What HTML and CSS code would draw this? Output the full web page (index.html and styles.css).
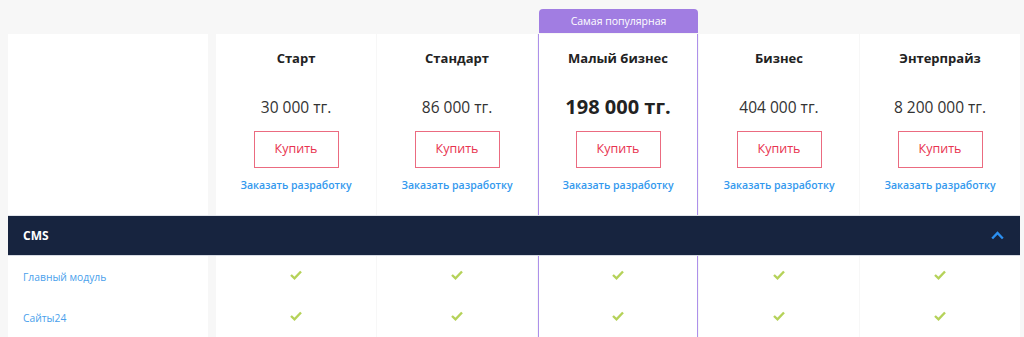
FILE: index.html
```html
<!DOCTYPE html>
<html lang="ru">
<head>
<meta charset="utf-8">
<title>Тарифы</title>
<link rel="stylesheet" href="styles.css">
</head>
<body>
<div class="table">
  <div class="grid head">
    <div class="cell first"></div>
    <div class="cell plan">
      <div class="name">Старт</div>
      <div class="price">30 000 тг.</div>
      <a class="buy">Купить</a>
      <a class="order">Заказать разработку</a>
    </div>
    <div class="cell plan">
      <div class="name">Стандарт</div>
      <div class="price">86 000 тг.</div>
      <a class="buy">Купить</a>
      <a class="order">Заказать разработку</a>
    </div>
    <div class="cell plan popular">
      <div class="badge">Самая популярная</div>
      <div class="name">Малый бизнес</div>
      <div class="price big">198 000 тг.</div>
      <a class="buy">Купить</a>
      <a class="order">Заказать разработку</a>
    </div>
    <div class="cell plan">
      <div class="name">Бизнес</div>
      <div class="price">404 000 тг.</div>
      <a class="buy">Купить</a>
      <a class="order">Заказать разработку</a>
    </div>
    <div class="cell plan">
      <div class="name">Энтерпрайз</div>
      <div class="price">8 200 000 тг.</div>
      <a class="buy">Купить</a>
      <a class="order">Заказать разработку</a>
    </div>
  </div>

  <div class="section">
    <span class="section-title">CMS</span>
    <svg class="chevron" width="13" height="9" viewBox="0 0 13 9"><polyline points="1.2,7.5 6.5,2 11.8,7.5" fill="none" stroke="#2b8ff0" stroke-width="2.4"/></svg>
  </div>

  <div class="grid row">
    <div class="cell first"><a class="feature">Главный модуль</a></div>
    <div class="cell check"><svg width="12" height="10" viewBox="0 0 12 10"><polyline points="1,5 4.5,8.3 11,1.5" fill="none" stroke="#b5d259" stroke-width="2.4"/></svg></div>
    <div class="cell check"><svg width="12" height="10" viewBox="0 0 12 10"><polyline points="1,5 4.5,8.3 11,1.5" fill="none" stroke="#b5d259" stroke-width="2.4"/></svg></div>
    <div class="cell check popular"><svg width="12" height="10" viewBox="0 0 12 10"><polyline points="1,5 4.5,8.3 11,1.5" fill="none" stroke="#b5d259" stroke-width="2.4"/></svg></div>
    <div class="cell check"><svg width="12" height="10" viewBox="0 0 12 10"><polyline points="1,5 4.5,8.3 11,1.5" fill="none" stroke="#b5d259" stroke-width="2.4"/></svg></div>
    <div class="cell check"><svg width="12" height="10" viewBox="0 0 12 10"><polyline points="1,5 4.5,8.3 11,1.5" fill="none" stroke="#b5d259" stroke-width="2.4"/></svg></div>
  </div>
  <div class="grid row">
    <div class="cell first"><a class="feature">Сайты24</a></div>
    <div class="cell check"><svg width="12" height="10" viewBox="0 0 12 10"><polyline points="1,5 4.5,8.3 11,1.5" fill="none" stroke="#b5d259" stroke-width="2.4"/></svg></div>
    <div class="cell check"><svg width="12" height="10" viewBox="0 0 12 10"><polyline points="1,5 4.5,8.3 11,1.5" fill="none" stroke="#b5d259" stroke-width="2.4"/></svg></div>
    <div class="cell check popular"><svg width="12" height="10" viewBox="0 0 12 10"><polyline points="1,5 4.5,8.3 11,1.5" fill="none" stroke="#b5d259" stroke-width="2.4"/></svg></div>
    <div class="cell check"><svg width="12" height="10" viewBox="0 0 12 10"><polyline points="1,5 4.5,8.3 11,1.5" fill="none" stroke="#b5d259" stroke-width="2.4"/></svg></div>
    <div class="cell check"><svg width="12" height="10" viewBox="0 0 12 10"><polyline points="1,5 4.5,8.3 11,1.5" fill="none" stroke="#b5d259" stroke-width="2.4"/></svg></div>
  </div>
</div>
</body>
</html>
```

FILE: styles.css
```css
html, body {
  margin: 0;
  padding: 0;
  background: #f7f7f7;
  font-family: "Open Sans", "Noto Sans", sans-serif;
  overflow: hidden;
}

.table {
  margin: 34px 0 0 8px;
  width: 1012px;
}

.grid {
  display: grid;
  grid-template-columns: 207px repeat(5, 160px);
  column-gap: 1px;
}

.cell {
  background: #fff;
  box-sizing: border-box;
  position: relative;
}

.cell.first {
  border-right: 7px solid #f7f7f7;
}

.cell.popular {
  border-left: 1px solid #ad90ea;
  border-right: 1px solid #ad90ea;
}

.head .cell {
  height: 181px;
}

.plan {
  display: flex;
  flex-direction: column;
  align-items: center;
  padding-top: 14px;
}

.name {
  font-size: 13px;
  font-weight: 700;
  color: #222;
  line-height: 20px;
}

.price {
  margin-top: 27px;
  font-size: 15.5px;
  color: #333;
  line-height: 24px;
}

.price.big {
  font-size: 20px;
  font-weight: 700;
  color: #222;
}

.buy {
  margin-top: 12px;
  width: 85px;
  height: 37px;
  box-sizing: border-box;
  border: 1px solid #eb6b80;
  display: flex;
  align-items: center;
  justify-content: center;
  color: #e8334f;
  font-size: 12.5px;
  line-height: 1;
}

.order {
  margin-top: 8px;
  font-size: 10.5px;
  font-weight: 600;
  color: #3399ee;
  line-height: 18px;
}

.badge {
  position: absolute;
  top: -25px;
  left: 0;
  right: -1px;
  height: 24px;
  background: #a17de2;
  border-radius: 4px 4px 0 0;
  color: #fff;
  font-size: 10.5px;
  line-height: 24px;
  text-align: center;
}

.section {
  height: 41px;
  box-sizing: border-box;
  background: #17243f;
  border-top: 1px solid #e2e5eb;
  border-bottom: 1px solid #d6dae3;
  display: flex;
  align-items: center;
  justify-content: space-between;
  padding: 0 16px 0 15px;
  position: relative;
  z-index: 1;
}

.section-title {
  color: #fff;
  font-size: 12px;
  font-weight: 700;
}

.chevron {
  display: block;
}

.row .cell {
  height: 41px;
}

.row .first {
  display: flex;
  align-items: center;
  padding-left: 15px;
}

.feature {
  font-size: 10.3px;
  color: #4a9fec;
}

.check {
  display: flex;
  align-items: center;
  justify-content: center;
}

.check svg {
  display: block;
  margin-top: -3px;
}
```
